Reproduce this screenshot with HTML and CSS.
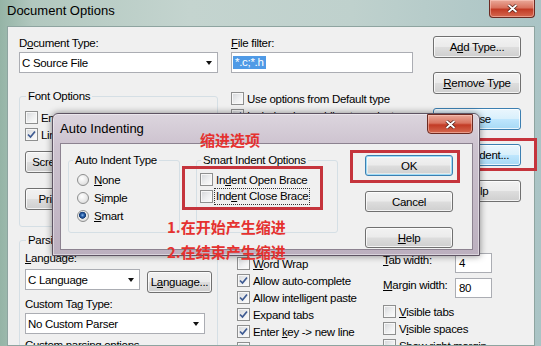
FILE: index.html
```html
<!DOCTYPE html>
<html lang="zh-CN">
<head>
  <meta charset="UTF-8" />
  <title>Document Options</title>
  <link rel="stylesheet" href="styles.css">
</head>
<body>
  <div class="window">
    <div class="titlebar">
      <span class="title">Document Options</span>
      <span class="close-btn">
        <svg width="11" height="9" viewBox="0 0 11 9"><path d="M1.5 1 L9.5 8 M9.5 1 L1.5 8" stroke="#4a1810" stroke-width="3.2"/><path d="M1.5 1 L9.5 8 M9.5 1 L1.5 8" stroke="#fff" stroke-width="1.8"/></svg>
      </span>
    </div>

    <div class="client">
      <div class="col-left">
        <div class="lbl">D<u>o</u>cument Type:</div>
        <div class="combo"><span>C Source File</span><span class="arrow"></span></div>

        <fieldset class="group font-group">
          <legend>Font Options</legend>
          <div class="check"><span class="cb"></span><span>Emulate fixed-width font using variable</span></div>
          <div class="check"><span class="cb on"><svg width="9" height="9" viewBox="0 0 9 9"><path d="M1 4.5 L3.5 7 L8 1.5" fill="none" stroke="#3d5a92" stroke-width="1.7"/></svg></span><span>Line numbers</span></div>
          <button class="btn screen-btn">Screen Fonts...</button>
          <button class="btn print-btn">Print Fonts...</button>
        </fieldset>

        <fieldset class="group parse-group">
          <legend>Parsing</legend>
          <div class="lbl"><u>L</u>anguage:</div>
          <div class="lang-row">
            <div class="combo lang-combo"><span>C Language</span><span class="arrow"></span></div>
            <button class="btn lang-btn">L<u>a</u>nguage...</button>
          </div>
          <div class="lbl tag-lbl">Custom Ta<u>g</u> Type:</div>
          <div class="combo tag-combo"><span>No Custom Parser</span><span class="arrow"></span></div>
          <div class="lbl tag-lbl">Custom parsing options</div>
        </fieldset>
      </div>

      <div class="col-right">
        <div class="upper">
          <div class="col-mid">
            <div class="lbl"><u>F</u>ile filter:</div>
            <div class="field"><span class="sel">*.c;*.h</span></div>
            <div class="check-list">
              <div class="check"><span class="cb"></span><span>Use options from Default type</span></div>
              <div class="check"><span class="cb on"><svg width="9" height="9" viewBox="0 0 9 9"><path d="M1 4.5 L3.5 7 L8 1.5" fill="none" stroke="#3d5a92" stroke-width="1.7"/></svg></span><span>Include when adding to projects</span></div>
              <div class="check"><span class="cb on"><svg width="9" height="9" viewBox="0 0 9 9"><path d="M1 4.5 L3.5 7 L8 1.5" fill="none" stroke="#3d5a92" stroke-width="1.7"/></svg></span><span>Parse file for symbols</span></div>
              <div class="check"><span class="cb"></span><span>Show page breaks</span></div>
            </div>
          </div>
          <div class="col-btns">
            <button class="btn">A<u>d</u>d Type...</button>
            <button class="btn"><u>R</u>emove Type</button>
            <button class="btn hot">Close</button>
            <button class="btn hot">Auto <u>I</u>ndent...</button>
            <button class="btn"><u>H</u>elp</button>
          </div>
        </div>

        <div class="editing">
          <div class="edit-checks">
            <div class="check"><span class="cb"></span><span><u>W</u>ord Wrap</span></div>
            <div class="check"><span class="cb on"><svg width="9" height="9" viewBox="0 0 9 9"><path d="M1 4.5 L3.5 7 L8 1.5" fill="none" stroke="#3d5a92" stroke-width="1.7"/></svg></span><span>Allow auto-complete</span></div>
            <div class="check"><span class="cb on"><svg width="9" height="9" viewBox="0 0 9 9"><path d="M1 4.5 L3.5 7 L8 1.5" fill="none" stroke="#3d5a92" stroke-width="1.7"/></svg></span><span>Allow intelligent paste</span></div>
            <div class="check"><span class="cb on"><svg width="9" height="9" viewBox="0 0 9 9"><path d="M1 4.5 L3.5 7 L8 1.5" fill="none" stroke="#3d5a92" stroke-width="1.7"/></svg></span><span>Expand tabs</span></div>
            <div class="check"><span class="cb on"><svg width="9" height="9" viewBox="0 0 9 9"><path d="M1 4.5 L3.5 7 L8 1.5" fill="none" stroke="#3d5a92" stroke-width="1.7"/></svg></span><span>Enter <u>k</u>ey -&gt; new line</span></div>
            <div class="check"><span class="cb"></span><span>Highlight references</span></div>
          </div>
          <div class="edit-fields">
            <div class="num-row"><span class="num-lbl"><u>T</u>ab width:</span><span class="field num">4</span></div>
            <div class="num-row"><span class="num-lbl"><u>M</u>argin width:</span><span class="field num">80</span></div>
            <div class="check vis-first"><span class="cb"></span><span><u>V</u>isible tabs</span></div>
            <div class="check"><span class="cb"></span><span>V<u>i</u>sible spaces</span></div>
            <div class="check"><span class="cb"></span><span>Show right margin</span></div>
          </div>
        </div>
      </div>
    </div>

    <div class="mark mark-indent"></div>

    <div class="dialog">
      <div class="dlg-titlebar">
        <span class="title">Auto Indenting</span>
        <span class="close-btn dlg-close">
          <svg width="11" height="9" viewBox="0 0 11 9"><path d="M1.5 1 L9.5 8 M9.5 1 L1.5 8" stroke="#4a1810" stroke-width="3.2"/><path d="M1.5 1 L9.5 8 M9.5 1 L1.5 8" stroke="#fff" stroke-width="1.8"/></svg>
        </span>
      </div>
      <div class="dlg-client">
        <fieldset class="group type-group">
          <legend>Auto Indent Type</legend>
          <div class="radio"><span class="rb"></span><span><u>N</u>one</span></div>
          <div class="radio"><span class="rb"></span><span>S<u>i</u>mple</span></div>
          <div class="radio"><span class="rb on"></span><span><u>S</u>mart</span></div>
        </fieldset>
        <fieldset class="group smart-group">
          <legend>Smart Indent Options</legend>
          <div class="check"><span class="cb"></span><span>In<u>d</u>ent Open Brace</span></div>
          <div class="check"><span class="cb"></span><span class="focus">Ind<u>e</u>nt Close Brace</span></div>
        </fieldset>
        <div class="dlg-btns">
          <button class="btn default">OK</button>
          <button class="btn">Cancel</button>
          <button class="btn"><u>H</u>elp</button>
        </div>
      </div>
    </div>

    <div class="mark mark-checks"></div>
    <div class="mark mark-ok"></div>
    <div class="note note-title">缩进选项</div>
    <div class="note note-1">1.在开始产生缩进</div>
    <div class="note note-2">2.在结束产生缩进</div>
  </div>
</body>
</html>
```

FILE: styles.css
```css
* {
  box-sizing: border-box;
}
body {
  margin: 0;
  width: 541px;
  height: 346px;
  overflow: hidden;
  font-family: "Liberation Sans", Arial, sans-serif;
  font-size: 11.5px;
  letter-spacing: -0.3px;
  color: #000;
}
u {
  text-underline-offset: 1px;
}

/* outer window */
.window {
  position: relative;
  width: 541px;
  height: 346px;
  overflow: hidden;
  background: linear-gradient(90deg, #95b4a6 0%, #b2c8bf 6%, #c4d4cf 35%, #bfd1cd 65%, #aac4c5 100%);
}
.titlebar {
  height: 26px;
  display: flex;
  padding-left: 7px;
}
.title {
  font-size: 13px;
  letter-spacing: 0;
  line-height: 22px;
}
.close-btn {
  margin-left: auto;
  margin-right: 6px;
  width: 46px;
  height: 18px;
  border: 1px solid #6b2a22;
  border-top: none;
  border-radius: 0 0 4px 4px;
  background: linear-gradient(#eaa999 0%, #d9735f 45%, #c23b25 55%, #d5684f 100%);
  box-shadow: inset 0 0 0 1px rgba(255, 210, 200, 0.5);
  display: flex;
  align-items: center;
  justify-content: center;
}
.client {
  margin-left: 7px;
  width: 528px;
  height: 320px;
  overflow: hidden;
  border: 1px solid #8ea4a0;
  background: #f0f0f0;
  padding: 9px 0 0 11px;
  display: flex;
  gap: 13px;
}
.col-left {
  width: 199px;
  flex: none;
}
.col-right {
  width: 290px;
  flex: none;
}
.upper {
  display: flex;
  gap: 20px;
}
.col-mid {
  width: 182px;
}
.col-btns {
  width: 88px;
  display: flex;
  flex-direction: column;
  gap: 14px;
}

/* controls */
.lbl {
  line-height: 14px;
  height: 14px;
  white-space: nowrap;
}
.combo {
  height: 21px;
  margin-top: 2px;
  border: 1px solid #abadb3;
  background: #fff;
  display: flex;
  align-items: center;
  justify-content: space-between;
  padding-left: 2px;
  white-space: nowrap;
}
.arrow {
  width: 17px;
  height: 100%;
  display: flex;
  align-items: center;
  justify-content: center;
}
.arrow::before {
  content: "";
  border-left: 3.5px solid transparent;
  border-right: 3.5px solid transparent;
  border-top: 4px solid #111;
}
.field {
  height: 21px;
  margin-top: 2px;
  border: 1px solid #abadb3;
  background: #fff;
  display: flex;
  align-items: center;
  padding-left: 1px;
}
.sel {
  background: #4f9ae6;
  color: #fff;
  line-height: 13px;
  padding: 0 2px;
}
.check,
.radio {
  display: flex;
  align-items: center;
  gap: 3px;
  height: 17px;
  white-space: nowrap;
}
.cb {
  flex: none;
  width: 13px;
  height: 13px;
  border: 1px solid #8e8f8f;
  background: linear-gradient(135deg, #d4d6d9 0%, #eeeff0 55%, #fdfdfd 100%);
  box-shadow: inset 0 0 0 1px #f7f7f7;
  display: flex;
  align-items: center;
  justify-content: center;
}
.radio {
  height: 18px;
  gap: 5px;
}
.rb {
  flex: none;
  width: 12px;
  height: 12px;
  border-radius: 50%;
  border: 1px solid #8e8f8f;
  background: radial-gradient(circle at 40% 35%, #fff 0, #e6e6e6 60%, #cdcdcd 100%);
}
.rb.on {
  background:
    radial-gradient(circle at 45% 42%, #8cbcec 0, #2c62ad 1.6px, #123a74 3.2px, rgba(18, 58, 116, 0) 3.8px),
    radial-gradient(circle at 40% 35%, #fff 0, #e6e6e6 60%, #cdcdcd 100%);
}
.focus {
  outline: 1px dotted #333;
  outline-offset: 1px;
  line-height: 13px;
}
.btn {
  display: block;
  width: 88px;
  height: 22px;
  padding: 0;
  font: inherit;
  letter-spacing: inherit;
  color: #000;
  white-space: nowrap;
  text-align: center;
  border: 1px solid #707070;
  border-radius: 3px;
  background: linear-gradient(#f2f2f2 0%, #ebebeb 48%, #dddddd 52%, #cfcfcf 100%);
  box-shadow: inset 0 0 0 1px rgba(255, 255, 255, 0.75);
}
.btn.hot {
  border-color: #3c7fb1;
  background: linear-gradient(#eaf6fd 0%, #d9f0fc 48%, #bee6fd 52%, #a7d9f5 100%);
}
.btn.default {
  border-color: #3c7fb1;
  box-shadow: inset 0 0 0 1px #9fdcf7, inset 0 0 0 2px rgba(255, 255, 255, 0.5);
}

/* group boxes */
.group {
  margin: 0;
  border: 1px solid #d5dfe5;
  border-radius: 3px;
  padding: 6px 5px 0 5px;
  min-width: 0;
}
.group legend {
  line-height: 14px;
  padding: 0 2px;
  margin-left: 1px;
}
.font-group {
  margin-top: 16px;
  height: 138px;
}
.screen-btn {
  margin-top: 8px;
}
.print-btn {
  margin-top: 15px;
}
.parse-group {
  margin-top: 6px;
  height: 140px;
  padding-top: 4px;
}
.lang-row {
  display: flex;
  align-items: flex-start;
  margin-top: 4px;
  height: 24px;
}
.lang-combo {
  width: 115px;
  margin-top: 0;
}
.lang-btn {
  width: 65px;
  margin: 2px 0 0 7px;
}
.tag-lbl {
  margin-top: 4px;
}
.tag-combo {
  width: 180px;
}
.check-list {
  margin-top: 17px;
}

/* editing options */
.editing {
  display: flex;
  margin-top: 51px;
  padding-left: 6px;
}
.edit-checks {
  width: 146px;
  padding-top: 2px;
}
.edit-fields {
  width: 120px;
}
.num-row {
  display: flex;
  height: 20px;
  margin-bottom: 5px;
}
.num-lbl {
  width: 72px;
  line-height: 14px;
  white-space: nowrap;
}
.field.num {
  width: 37px;
  height: 20px;
  margin-top: 0;
  padding-left: 3px;
}
.vis-first {
  margin-top: 3px;
}

/* Auto Indenting dialog */
.dialog {
  position: absolute;
  left: 52px;
  top: 113px;
  width: 428px;
  height: 143px;
  border: 1px solid #5e5463;
  border-radius: 6px 6px 0 0;
  background: linear-gradient(#dcd5de 0%, #cdc3cf 22%, #bcb0bf 100%);
  box-shadow: 0 0 7px rgba(0, 0, 0, 0.45), inset 0 0 0 1px rgba(255, 255, 255, 0.45);
}
.dlg-titlebar {
  height: 29px;
  display: flex;
  padding-left: 7px;
}
.dlg-titlebar .title {
  line-height: 29px;
}
.dlg-close {
  margin-right: 6px;
  height: 20px;
  border-top: 1px solid #6b2a22;
  border-radius: 0 0 4px 4px;
}
.dlg-client {
  margin: 0 6px 0 7px;
  height: 107px;
  border: 1px solid #8c8290;
  background: #f0f0f0;
  display: flex;
  align-items: flex-start;
  padding: 9px 0 0 7px;
}
.type-group {
  width: 112px;
  height: 80px;
  padding: 4px 0 0 8px;
}
.type-group legend {
  margin-left: -4px;
}
.smart-group {
  width: 142px;
  height: 80px;
  margin-left: 16px;
  padding: 4px 0 0 3px;
}
.dlg-btns {
  margin: 2px 0 0 27px;
  display: flex;
  flex-direction: column;
  gap: 15px;
}
.dlg-btns .btn {
  height: 21px;
}

/* red annotations */
.mark {
  position: absolute;
  border: 3px solid #c5343c;
}
.mark-indent {
  left: 426px;
  top: 138px;
  width: 111px;
  height: 33px;
}
.mark-checks {
  left: 182px;
  top: 166px;
  width: 141px;
  height: 44px;
}
.mark-ok {
  left: 350px;
  top: 150px;
  width: 110px;
  height: 33px;
}
.note {
  position: absolute;
  font-family: "Noto Sans CJK SC", sans-serif;
  font-weight: bold;
  font-size: 15px;
  line-height: 15px;
  letter-spacing: 0;
  color: #e5312f;
  white-space: nowrap;
}
.note-title {
  left: 200px;
  top: 132px;
}
.note-1 {
  left: 167px;
  top: 219px;
}
.note-2 {
  left: 167px;
  top: 244px;
}
```
